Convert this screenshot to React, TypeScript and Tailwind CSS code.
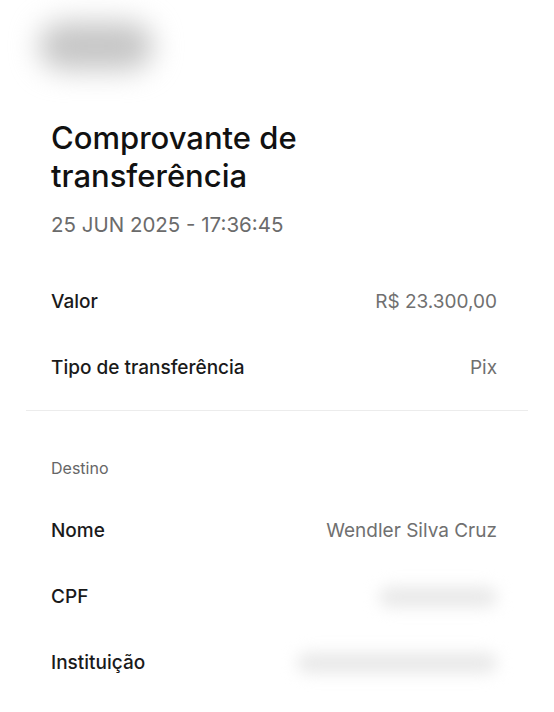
const rows: { label: string; value?: string; blur?: string }[] = [
  { label: "Nome", value: "Wendler Silva Cruz" },
  { label: "CPF", blur: "w-[118px]" },
  { label: "Instituição", blur: "w-[200px]" },
];

function Row({ label, value, blur }: { label: string; value?: string; blur?: string }) {
  return (
    <div className="flex h-[66px] items-center justify-between">
      <span className="text-[19px] font-medium text-[#1a1a1a]">{label}</span>
      {value ? (
        <span className="text-[19px] text-[#707070]">{value}</span>
      ) : (
        <span className={`h-[20px] rounded-full bg-[#e8e8e8] blur-[8px] ${blur}`} />
      )}
    </div>
  );
}

export default function App() {
  return (
    <div className="h-[712px] w-[554px] overflow-hidden bg-white font-['Inter',sans-serif]">
      <div className="pl-[51px] pr-[57px] pt-[22px]">
        <div className="ml-[-12px] h-[48px] w-[114px] rounded-full bg-[#c6c6c6] blur-[14px]" />

        <h1 className="mt-[49px] text-[31px] font-medium leading-[37.5px] text-[#111]">
          Comprovante de
          <br />
          transferência
        </h1>
        <p className="mt-[19px] text-[20.5px] leading-[24px] text-[#6b6b6b]">25 JUN 2025 - 17:36:45</p>

        <div className="mt-[32px]">
          <Row label="Valor" value="R$ 23.300,00" />
          <Row label="Tipo de transferência" value="Pix" />
        </div>
      </div>

      <div className="mx-[26px] mt-[9px] border-t border-[#ececec]" />

      <div className="pl-[51px] pr-[57px]">
        <p className="pt-[47px] text-[16px] leading-[20px] text-[#666]">Destino</p>
        <div className="mt-[20px]">
          {rows.map((r) => (
            <Row key={r.label} {...r} />
          ))}
        </div>
      </div>
    </div>
  );
}
